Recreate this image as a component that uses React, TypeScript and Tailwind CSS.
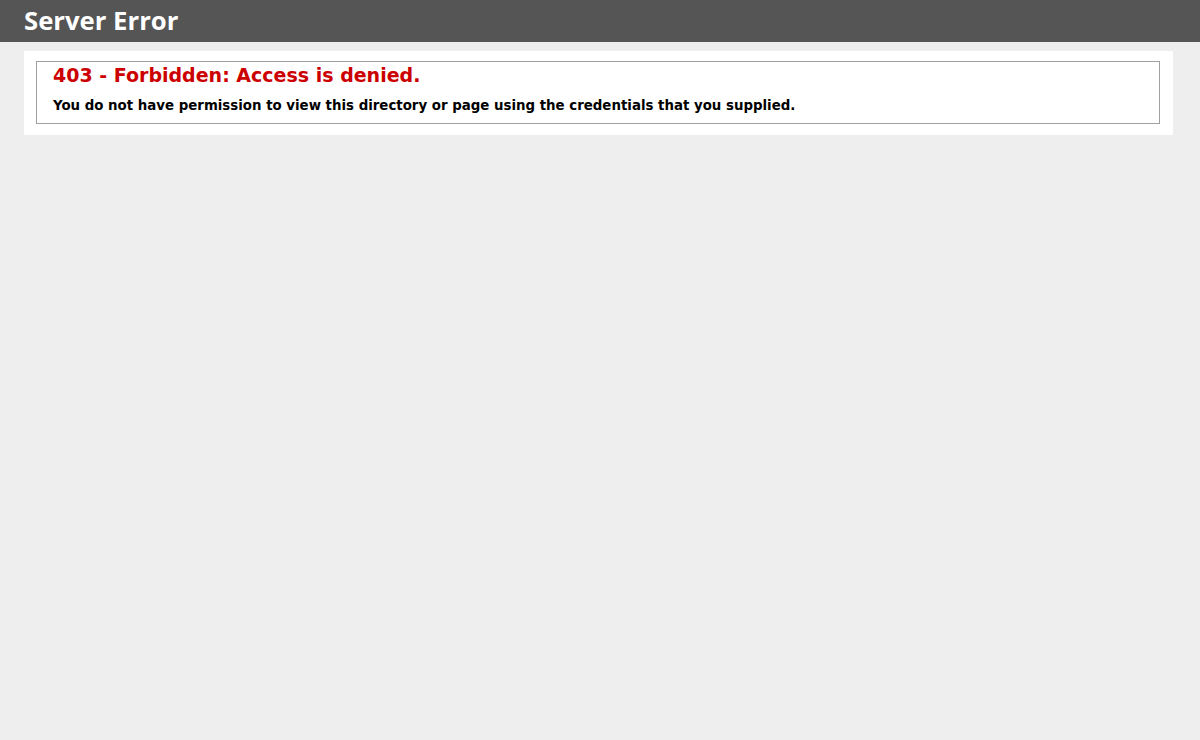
export default function App() {
  return (
    <div className="min-h-[740px] bg-[#eeeeee] font-['DejaVu_Sans',Verdana,sans-serif] text-[11.2px]">
      <div className="flex h-[42px] items-center bg-[#555555] px-[24px]">
        <h1 className="font-['Open_Sans','DejaVu_Sans',sans-serif] text-[25.7px] font-bold leading-none text-white">
          Server Error
        </h1>
      </div>
      <div className="ml-[24px] mt-[9px] w-[1149px] bg-white pb-[11px] pl-[12px] pr-[13px] pt-[10px]">
        <div className="border border-[#a0a0a0] px-[16px] pb-[9px] pt-[1px]">
          <h2 className="text-[19px] font-bold leading-[24px] text-[#cc0000]">
            403 - Forbidden: Access is denied.
          </h2>
          <h3 className="mt-[11px] text-[13.35px] font-bold leading-[16px] text-black">
            You do not have permission to view this directory or page using the credentials that you supplied.
          </h3>
        </div>
      </div>
    </div>
  )
}
